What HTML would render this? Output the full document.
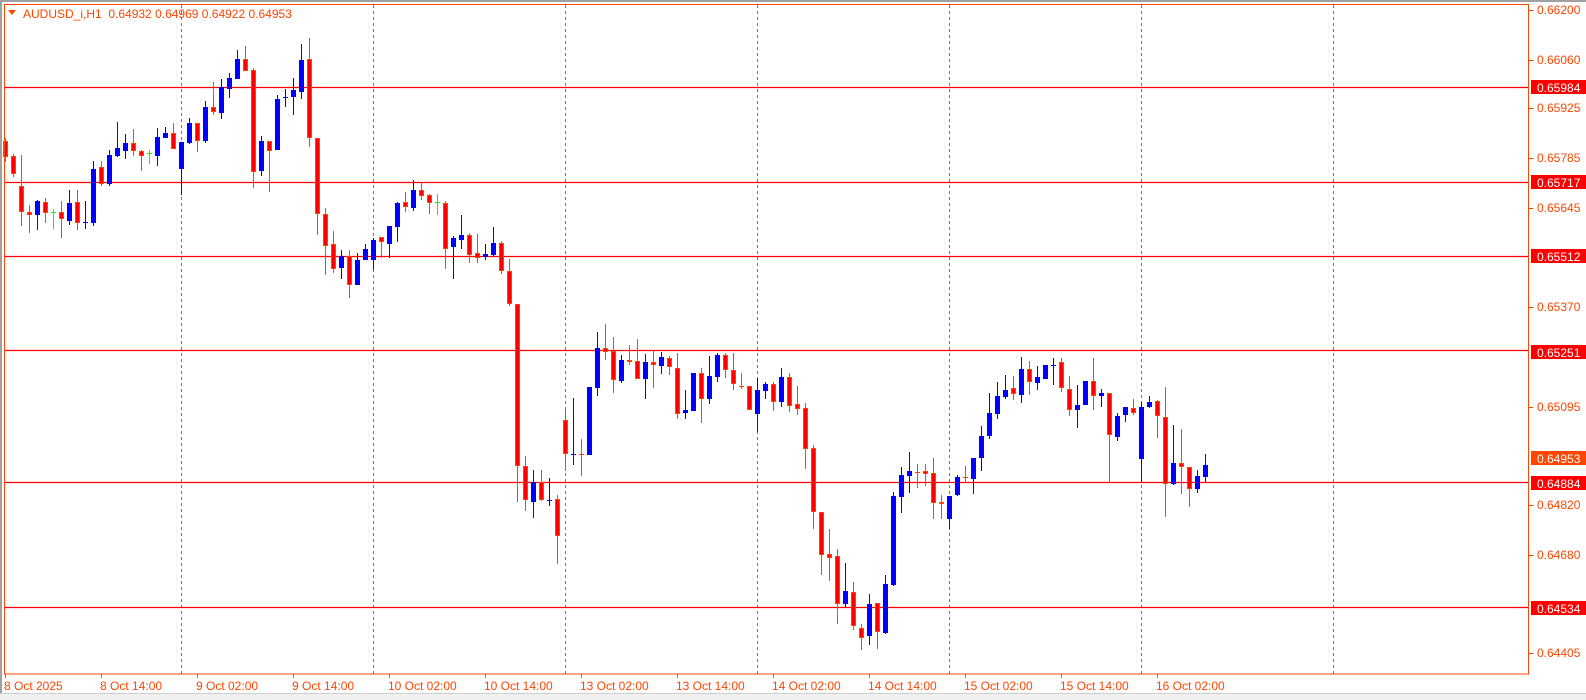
<!DOCTYPE html>
<html><head><meta charset="utf-8">
<style>
html,body{margin:0;padding:0;background:#fff;width:1586px;height:700px;overflow:hidden}
svg{display:block}
text{font-family:"Liberation Sans",sans-serif;font-size:12px}
</style></head>
<body>
<svg id="c" width="1586" height="700" xmlns="http://www.w3.org/2000/svg">
<rect x="0" y="0" width="1586" height="700" fill="#fff"/>
<rect x="0" y="0" width="1586" height="2" fill="#a0a0a0"/>
<rect x="0" y="0" width="2" height="700" fill="#a0a0a0"/>
<rect x="0" y="694" width="1586" height="6" fill="#f0f0f0"/>
<rect x="0" y="693" width="1586" height="1" fill="#d0d0d0"/>
<g id="grid" stroke="#ff4500" stroke-width="1" stroke-dasharray="3,3">
<line x1="181.5" y1="5" x2="181.5" y2="674"/>
<line x1="373.5" y1="5" x2="373.5" y2="674"/>
<line x1="565.5" y1="5" x2="565.5" y2="674"/>
<line x1="757.5" y1="5" x2="757.5" y2="674"/>
<line x1="949.5" y1="5" x2="949.5" y2="674"/>
<line x1="1141.5" y1="5" x2="1141.5" y2="674"/>
<line x1="1333.5" y1="5" x2="1333.5" y2="674"/>
</g>
<g stroke="#ff0000" stroke-width="1.3">
<line x1="4" y1="87.5" x2="1529" y2="87.5"/>
<line x1="4" y1="182.5" x2="1529" y2="182.5"/>
<line x1="4" y1="256.5" x2="1529" y2="256.5"/>
<line x1="4" y1="350.5" x2="1529" y2="350.5"/>
<line x1="4" y1="482.5" x2="1529" y2="482.5"/>
<line x1="4" y1="607.5" x2="1529" y2="607.5"/>
</g>
<g id="candles"></g>
<rect x="4.5" y="4.5" width="1524" height="669.5" fill="none" stroke="#ff4500" stroke-width="1"/>
<g fill="#ff4500">
<polygon points="8,10 16,10 12,15"/>
<text x="23" y="18">AUDUSD_i,H1&#160;&#160;0.64932 0.64969 0.64922 0.64953</text>
</g>
<g stroke="#ff4500">
<line x1="1529" y1="10.5" x2="1533" y2="10.5"/>
<line x1="1529" y1="60.5" x2="1533" y2="60.5"/>
<line x1="1529" y1="108.5" x2="1533" y2="108.5"/>
<line x1="1529" y1="158.5" x2="1533" y2="158.5"/>
<line x1="1529" y1="208.5" x2="1533" y2="208.5"/>
<line x1="1529" y1="307.5" x2="1533" y2="307.5"/>
<line x1="1529" y1="407.5" x2="1533" y2="407.5"/>
<line x1="1529" y1="505.5" x2="1533" y2="505.5"/>
<line x1="1529" y1="555.5" x2="1533" y2="555.5"/>
<line x1="1529" y1="653.5" x2="1533" y2="653.5"/>
</g>
<g fill="#ff4500">
<text x="1537" y="14">0.66200</text>
<text x="1537" y="64">0.66060</text>
<text x="1537" y="112">0.65925</text>
<text x="1537" y="162">0.65785</text>
<text x="1537" y="212">0.65645</text>
<text x="1537" y="311">0.65370</text>
<text x="1537" y="359">0.65236</text>
<text x="1537" y="411">0.65095</text>
<text x="1537" y="509">0.64820</text>
<text x="1537" y="559">0.64680</text>
<text x="1537" y="657">0.64405</text>
</g>
<g>
<rect x="1531" y="80" width="55" height="14" fill="#ff0000"/>
<rect x="1531" y="175" width="55" height="14" fill="#ff0000"/>
<rect x="1531" y="249" width="55" height="14" fill="#ff0000"/>
<rect x="1531" y="345" width="55" height="14" fill="#ff0000"/>
<rect x="1531" y="451" width="55" height="14" fill="#ff4500"/>
<rect x="1531" y="476" width="55" height="14" fill="#ff0000"/>
<rect x="1531" y="601" width="55" height="14" fill="#ff0000"/>
</g>
<g fill="#fff">
<text x="1537" y="92">0.65984</text>
<text x="1537" y="187">0.65717</text>
<text x="1537" y="261">0.65512</text>
<text x="1537" y="357">0.65251</text>
<text x="1537" y="463">0.64953</text>
<text x="1537" y="488">0.64884</text>
<text x="1537" y="613">0.64534</text>
</g>
<g id="xt" stroke="#ff4500"></g>
<g fill="#ff4500">
<text x="4" y="690">8 Oct 2025</text>
<text x="100" y="690">8 Oct 14:00</text>
<text x="196" y="690">9 Oct 02:00</text>
<text x="292" y="690">9 Oct 14:00</text>
<text x="388" y="690">10 Oct 02:00</text>
<text x="484" y="690">10 Oct 14:00</text>
<text x="580" y="690">13 Oct 02:00</text>
<text x="676" y="690">13 Oct 14:00</text>
<text x="772" y="690">14 Oct 02:00</text>
<text x="868" y="690">14 Oct 14:00</text>
<text x="964" y="690">15 Oct 02:00</text>
<text x="1060" y="690">15 Oct 14:00</text>
<text x="1156" y="690">16 Oct 02:00</text>
</g>
</svg>
<script>
var D=[
[138,162,141,157,'r'],[154,177,156,174,'r'],[155,226,186,212,'r'],[205,233,212,215,'r'],[200,230,201,215,'b'],
[198,223,202,213,'r'],[209,229,212,212,'g'],[201,238,212,219,'r'],[190,225,203,221,'b'],[190,230,202,223,'r'],
[201,229,222,222,'b'],[161,226,169,223,'b'],[161,186,167,184,'r'],[150,186,155,184,'b'],[122,157,148,156,'b'],
[134,159,143,151,'b'],[129,156,143,151,'r'],[150,171,151,156,'r'],[150,164,153,153,'g'],[128,166,137,156,'b'],
[127,138,133,138,'b'],[123,149,133,149,'r'],[142,195,142,169,'b'],[118,144,123,143,'b'],[123,152,123,141,'r'],
[101,143,107,141,'b'],[82,115,107,112,'r'],[79,119,87,113,'b'],[73,98,78,89,'b'],[50,79,59,79,'b'],
[46,71,59,71,'r'],[68,188,70,172,'r'],[136,176,141,171,'b'],[141,192,141,151,'r'],[95,150,99,150,'b'],
[89,107,97,97,'b'],[78,115,90,97,'b'],[44,99,60,92,'b'],[38,147,59,138,'r'],[138,235,138,214,'r'],
[208,275,214,246,'r'],[231,273,244,269,'r'],[250,279,256,268,'b'],[250,298,256,285,'r'],[253,285,260,285,'b'],
[244,260,249,260,'b'],[238,270,240,260,'b'],[237,258,237,242,'r'],[226,258,226,244,'b'],[202,242,203,227,'b'],
[192,212,202,207,'r'],[180,211,190,208,'b'],[183,200,190,196,'r'],[194,214,195,203,'r'],[194,215,202,202,'g'],
[201,269,203,249,'r'],[236,279,238,247,'b'],[215,249,235,240,'b'],[233,263,235,255,'r'],[234,263,253,258,'r'],
[244,260,254,257,'b'],[227,256,243,255,'b'],[241,274,243,271,'r'],[259,306,271,304,'r'],[304,502,304,466,'r'],
[456,511,466,500,'r'],[470,518,482,502,'b'],[470,501,482,500,'r'],[478,506,500,500,'b'],[495,564,499,536,'r'],
[407,471,420,454,'r'],[398,465,454,454,'b'],[439,476,454,454,'r'],[387,455,387,455,'b'],[332,396,348,388,'b'],
[324,360,348,352,'r'],[337,393,351,380,'r'],[355,383,360,381,'b'],[345,365,360,362,'r'],[339,379,361,379,'r'],
[354,399,362,379,'b'],[350,388,362,365,'r'],[352,374,357,366,'b'],[356,375,358,367,'r'],[353,419,368,414,'r'],
[390,419,410,413,'b'],[373,411,373,411,'b'],[368,423,373,399,'r'],[356,404,376,399,'b'],[353,382,355,377,'b'],
[353,378,355,370,'r'],[353,390,370,384,'r'],[373,389,386,386,'r'],[386,410,386,410,'r'],[378,432,390,414,'b'],
[382,399,384,391,'b'],[382,411,384,402,'r'],[368,407,377,402,'b'],[373,412,377,406,'r'],[386,415,404,409,'r'],
[403,469,408,449,'r'],[445,529,448,512,'r'],[512,575,512,555,'r'],[529,581,554,558,'r'],[549,624,556,604,'r'],
[563,607,591,604,'b'],[582,630,592,626,'r'],[624,650,628,638,'r'],[594,645,604,636,'b'],[603,649,603,632,'r'],
[575,634,584,633,'b'],[492,586,496,585,'b'],[467,513,475,497,'b'],[452,493,471,476,'b'],[464,488,472,472,'r'],
[464,486,471,474,'r'],[458,519,473,503,'r'],[495,519,502,504,'r'],[496,529,496,519,'b'],[475,496,477,495,'b'],
[466,482,477,477,'r'],[458,494,458,479,'b'],[426,471,436,458,'b'],[393,439,413,436,'b'],[382,419,396,414,'b'],
[375,399,390,397,'b'],[376,400,388,394,'r'],[357,403,369,395,'b'],[361,395,369,382,'r'],[366,390,377,383,'b'],
[365,379,365,379,'b'],[358,385,365,365,'b'],[358,392,362,388,'r'],[376,416,389,410,'r'],[385,428,405,410,'b'],
[381,405,381,405,'b'],[358,410,381,396,'r'],[389,407,393,396,'b'],[393,482,393,435,'r'],[413,441,416,437,'b'],
[407,422,407,415,'b'],[399,415,408,413,'r'],[402,482,407,459,'b'],[396,408,402,407,'b'],[400,438,401,416,'r'],
[387,517,417,484,'r'],[425,485,463,484,'b'],[429,494,463,467,'r'],[467,507,467,489,'r'],[470,493,476,489,'b'],
[454,482,465,477,'b']];
var ns="http://www.w3.org/2000/svg",g=document.getElementById('candles'),s='';
for(var i=0;i<D.length;i++){var d=D[i],x=5+8*i,c=d[4];
var wc=c=='b'?'#0000ff':(c=='g'?'#00ff00':'#ff4500');
s+='<line x1="'+(x+0.5)+'" y1="'+d[0]+'" x2="'+(x+0.5)+'" y2="'+d[1]+'" stroke="'+wc+'" stroke-width="1"/>';
var h=d[3]-d[2];
if(h<1){s+='<line x1="'+(x-2)+'" y1="'+(d[2]+0.5)+'" x2="'+(x+3)+'" y2="'+(d[2]+0.5)+'" stroke="'+wc+'" stroke-width="1"/>';}
else if(c=='b'){s+='<rect x="'+(x-2)+'" y="'+d[2]+'" width="5" height="'+h+'" fill="#0000ff"/>';}
else{s+='<rect x="'+(x-1.5)+'" y="'+(d[2]+0.5)+'" width="4" height="'+Math.max(h-1,1)+'" fill="#ff0000" stroke="#ff4500" stroke-width="1"/>';}
}
g.innerHTML=s;
var xt='';for(var k=0;k<13;k++){var tx=5+96*k+0.5;xt+='<line x1="'+tx+'" y1="674" x2="'+tx+'" y2="678"/>';}
document.getElementById('xt').innerHTML=xt;
</script>
</body></html>
